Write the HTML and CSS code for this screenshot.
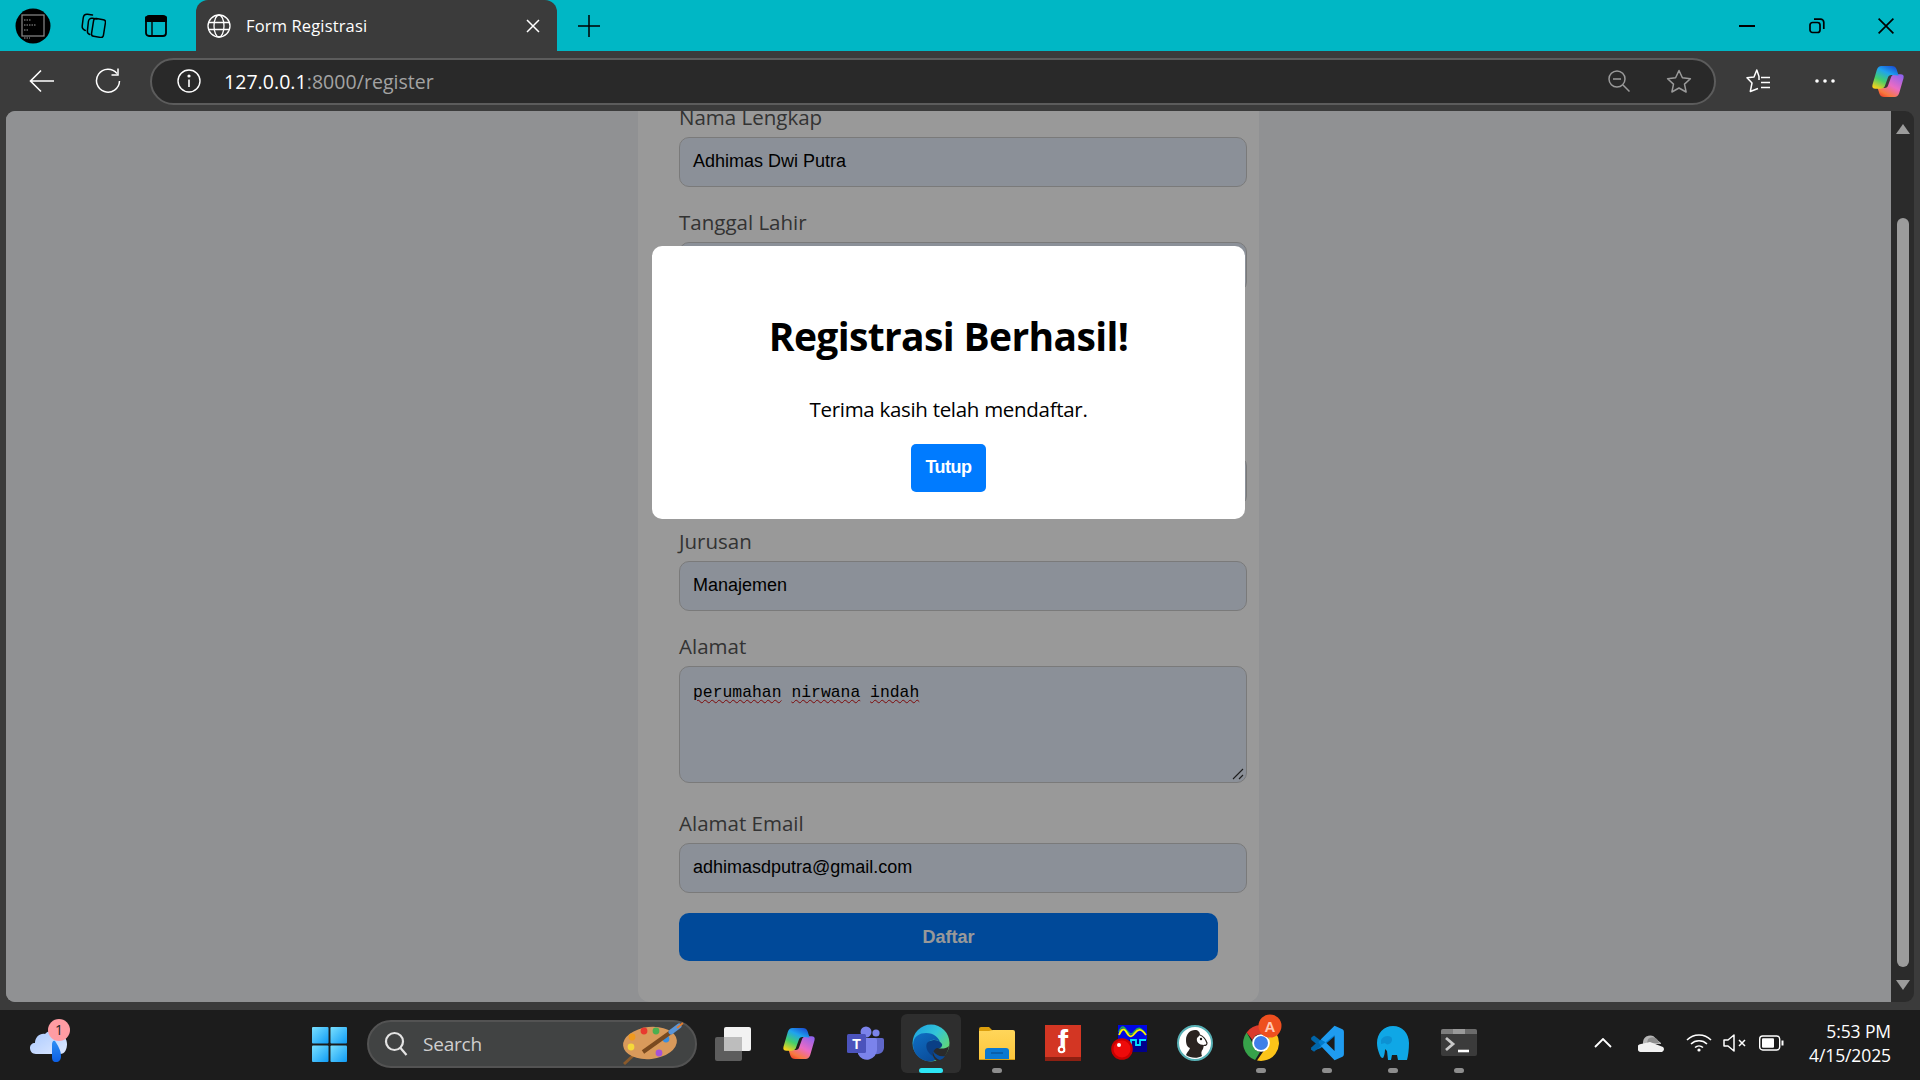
FILE: index.html
```html
<!DOCTYPE html>
<html lang="id">
<head>
<meta charset="utf-8">
<title>Form Registrasi</title>
<link rel="stylesheet" href="styles.css">
</head>
<body>
<div class="titlebar">
  <div class="slot s-avatar">
    <svg width="36" height="36" viewBox="0 0 36 36"><circle cx="18" cy="18" r="17.5" fill="#000"/><rect x="7" y="7" width="22" height="21" fill="none" stroke="#8a8a8a" stroke-width="1.2"/><path d="M9 12h7M9 17h12M9 22h5M9 30h6" stroke="#9a9a9a" stroke-width="1" stroke-dasharray="1.5 1"/></svg>
  </div>
  <div class="slot s-coll">
    <svg width="25" height="25" viewBox="0 0 25 25" fill="none" stroke="#000" stroke-width="1.5" stroke-linecap="round"><rect x="11.500" y="6" width="12" height="18" rx="2.500" transform="rotate(9 17.500 15)"/><path d="M8.800 21.500C7 20.800 6.200 19.500 6.400 17.800L7.400 8.500C7.700 6.500 9.200 5 11.200 5.300L16 6"/><path d="M4.300 17.500C2 16.500 1 15 1.200 13L2.200 5C2.500 2.500 4.200 1 6.500 1.200L11.500 2"/></svg>
  </div>
  <div class="slot s-win">
    <svg width="22" height="22" viewBox="0 0 22 22" fill="none" stroke="#000" stroke-width="1.800"><rect x="1" y="1" width="20" height="20" rx="3"/><path d="M1 2.500h20v3.500H1z" fill="#000"/><path d="M7 6v15" stroke-width="1.400"/></svg>
  </div>
  <div class="tab">
    <svg width="24" height="24" viewBox="0 0 24 24" fill="none" stroke="#fff" stroke-width="1.300"><circle cx="12" cy="12" r="11"/><ellipse cx="12" cy="12" rx="5" ry="11"/><path d="M1.500 8.500h21M1.500 15.500h21"/></svg>
    <span class="tab-title">Form Registrasi</span>
    <svg class="tab-close" width="14" height="14" viewBox="0 0 14 14" stroke="#fff" stroke-width="1.500"><path d="M1 1l12 12M13 1L1 13"/></svg>
  </div>
  <div class="slot s-plus">
    <svg width="22" height="22" viewBox="0 0 22 22" stroke="#000" stroke-width="1.500"><path d="M11 0v22M0 11h22"/></svg>
  </div>
  <div class="win-controls">
    <div class="slot s-ctrl"><svg width="16" height="4" viewBox="0 0 16 4" stroke="#000" stroke-width="2"><path d="M0 2h16"/></svg></div>
    <div class="slot s-ctrl"><svg width="16" height="16" viewBox="0 0 16 16" fill="none" stroke="#000" stroke-width="1.700"><rect x="1" y="4.500" width="10" height="10" rx="2.500"/><path d="M5 1.200h6.500c1.800 0 3.300 1.500 3.300 3.300V11"/></svg></div>
    <div class="slot s-ctrl s-close"><svg width="16" height="16" viewBox="0 0 16 16" stroke="#000" stroke-width="1.700"><path d="M.6.600l14.800 14.800M15.400.600L.6 15.400"/></svg></div>
  </div>
</div>

<div class="toolbar">
  <div class="slot s-back"><svg width="26" height="24" viewBox="0 0 26 24" fill="none" stroke="#fff" stroke-width="1.600"><path d="M25 12H1.500M12 1.500L1.500 12 12 22.500"/></svg></div>
  <div class="slot s-reload"><svg width="26" height="26" viewBox="0 0 26 26" fill="none" stroke="#fff" stroke-width="1.500"><path d="M22 5.500A11.500 11.500 0 1 0 24.500 13"/><path d="M23 .5V7h-6.500"/></svg></div>
  <div class="address">
    <svg width="24" height="24" viewBox="0 0 24 24" fill="none" stroke="#fff" stroke-width="1.400"><circle cx="12" cy="12" r="11"/><path d="M12 10.500V18" stroke-width="1.600"/><circle cx="12" cy="7" r=".9" fill="#fff"/></svg>
    <div class="url"><span class="url-host">127.0.0.1</span><span class="url-rest">:8000/register</span></div>
    <svg class="addr-zoom" width="22" height="22" viewBox="0 0 22 22" fill="none" stroke="#9a9a9a" stroke-width="1.500"><circle cx="9" cy="9" r="8"/><path d="M5 9h8M15 15l6.500 6.500"/></svg>
    <svg class="addr-star" width="26" height="24" viewBox="0 0 26 24" fill="none" stroke="#9a9a9a" stroke-width="1.500" stroke-linejoin="round"><path d="M13 1.500l3.400 7.300 8 .9-5.900 5.400 1.600 7.900-7.100-4-7.100 4 1.600-7.900L1.600 9.700l8-.9z"/></svg>
  </div>
  <div class="slot s-fav"><svg width="26" height="26" viewBox="0 0 26 26" fill="none" stroke="#fff" stroke-width="1.500" stroke-linejoin="round"><path d="M13 12V8.500L10.800 2 8 9 1 9.800l5 5.200-1.700 8.500 7.700-3"/><path d="M15 9.500h9M15 14.500h9M15 19.500h9"/></svg></div>
  <div class="slot s-dots"><svg width="20" height="4" viewBox="0 0 20 4" fill="#fff"><circle cx="2" cy="2" r="1.800"/><circle cx="10" cy="2" r="1.800"/><circle cx="18" cy="2" r="1.800"/></svg></div>
  <div class="slot s-copilot">
    <svg width="36" height="33" viewBox="0 0 100 100">
      <defs>
        <linearGradient id="cpA" x1=".75" y1="0" x2=".2" y2="1"><stop offset="0" stop-color="#1a55d6"/><stop offset=".3" stop-color="#1fa3ef"/><stop offset=".65" stop-color="#43cf6b"/><stop offset="1" stop-color="#f7d21c"/></linearGradient>
        <linearGradient id="cpB" x1=".85" y1="0" x2=".2" y2="1"><stop offset="0" stop-color="#8f63ee"/><stop offset=".5" stop-color="#ea6bc4"/><stop offset=".85" stop-color="#f77a3d"/><stop offset="1" stop-color="#f0442c"/></linearGradient>
      </defs>
      <path fill="url(#cpB)" d="M70 97H38Q28 97 24 87L18 68 40 70Q48 70 51 60L60 35Q64 28 72 28H88Q100 28 97 40L84 85Q80 97 70 97Z"/>
      <path fill="url(#cpA)" d="M30 3H62Q72 3 76 13L82 32 60 30Q52 30 49 40L40 65Q36 72 28 72H12Q0 72 3 60L16 15Q20 3 30 3Z"/>
    </svg>
  </div>
</div>

<div class="workspace">
  <main class="viewport">
    <div class="card">
      <div class="field"><div class="label">Nama Lengkap</div><div class="input">Adhimas Dwi Putra</div></div>
      <div class="field"><div class="label">Tanggal Lahir</div><div class="input"></div></div>
      <div class="covered"></div>
      <div class="field"><div class="label"></div><div class="input"></div></div>
      <div class="field"><div class="label">Jurusan</div><div class="input">Manajemen</div></div>
      <div class="field field-area">
        <div class="label">Alamat</div>
        <div class="input textarea"><span class="misspelt">perumahan</span> <span class="misspelt">nirwana</span> <span class="misspelt">indah</span>
          <svg class="resizer" width="12" height="12" viewBox="0 0 12 12" stroke="#333" stroke-width="1.100"><path d="M1 11L11 1M7 11l4-4"/></svg>
        </div>
      </div>
      <div class="field"><div class="label">Alamat Email</div><div class="input">adhimasdputra@gmail.com</div></div>
      <div class="submit">Daftar</div>
    </div>
    <div class="overlay">
      <div class="modal">
        <h1 class="modal-title">Registrasi Berhasil!</h1>
        <p class="modal-text">Terima kasih telah mendaftar.</p>
        <div class="modal-btn">Tutup</div>
      </div>
    </div>
  </main>
  <div class="scrollbar">
    <div class="arrow-up"></div>
    <div class="thumb"></div>
    <div class="arrow-down"></div>
  </div>
</div>

<div class="taskbar">
  <div class="slot t-weather">
    <svg width="48" height="48" viewBox="0 0 48 48">
      <defs><linearGradient id="wc" x1="0" y1="0" x2="1" y2="1"><stop offset="0" stop-color="#a9c9ff"/><stop offset="1" stop-color="#dfe9ff"/></linearGradient><linearGradient id="wd" x1="0" y1="0" x2="0" y2="1"><stop offset="0" stop-color="#2f8ff5"/><stop offset="1" stop-color="#0b5fe6"/></linearGradient></defs>
      <path fill="url(#wc)" d="M12 35C8 35 6 32 6 29S8 24 11 24C11 18 16 14 21 15 24 11 31 11 35 15 40 16 43 20 43 25S41 35 36 35Z"/>
      <path fill="url(#wd)" d="M31 22C34 27 37 31 37 37 37 41 35 43 32 43S28 41 28 38V26C28 23 29 21 31 22Z"/>
      <circle cx="35" cy="11" r="11" fill="#ff9ca3"/>
      <text class="w-badge" x="35" y="16" text-anchor="middle">1</text>
    </svg>
  </div>
  <div class="slot t-start">
    <svg width="35" height="35" viewBox="0 0 36 36"><defs><linearGradient id="wn" x1="0" y1="0" x2="1" y2="1"><stop offset="0" stop-color="#7ae0ff"/><stop offset="1" stop-color="#0f9bf5"/></linearGradient></defs><rect x="0" y="0" width="17" height="17" rx="1" fill="url(#wn)"/><rect x="19" y="0" width="17" height="17" rx="1" fill="url(#wn)"/><rect x="0" y="19" width="17" height="17" rx="1" fill="url(#wn)"/><rect x="19" y="19" width="17" height="17" rx="1" fill="url(#wn)"/></svg>
  </div>
  <div class="search">
    <svg width="24" height="26" viewBox="0 0 24 26" fill="none" stroke="#e4e4e4" stroke-width="2.200"><circle cx="10.500" cy="10.500" r="8.500"/><path d="M16.500 17l6 7"/></svg>
    <span class="search-text">Search</span>
    <svg class="palette" width="64" height="44" viewBox="0 0 64 44">
      <path stroke="#8a5a2b" stroke-width="3" d="M3 42l12-11"/>
      <ellipse cx="29" cy="21" rx="27" ry="16" fill="#d99a5b" transform="rotate(-6 29 21)"/>
      <circle cx="11" cy="15" r="3.400" fill="#f09a1e"/><circle cx="23" cy="9" r="3.400" fill="#e8392f"/><circle cx="35" cy="9" r="3.400" fill="#4caf50"/><circle cx="45" cy="17" r="3.400" fill="#3a8fe0"/><circle cx="38" cy="31" r="3.400" fill="#a653d6"/><circle cx="10" cy="25" r="3.400" fill="#f5d83a"/>
      <path stroke="#7a4a1f" stroke-width="4" d="M22 30L50 10"/><path stroke="#5a95d8" stroke-width="5" stroke-linecap="round" d="M50 10l8-6"/><path stroke="#e07b2e" stroke-width="2" d="M56 6l6-5"/>
    </svg>
  </div>
  <div class="apps">
    <div class="slot app"><svg width="36" height="36" viewBox="0 0 36 36"><rect x="0" y="12" width="27" height="24" rx="2" fill="#5d5d5d"/><rect x="9" y="2" width="27" height="24" rx="2" fill="#f2f2f2"/><rect x="9" y="12" width="18" height="14" fill="#bdbdbd"/></svg></div>
    <div class="slot app">
      <svg width="36" height="33" viewBox="0 0 100 100">
        <path fill="url(#cpB)" d="M70 97H38Q28 97 24 87L18 68 40 70Q48 70 51 60L60 35Q64 28 72 28H88Q100 28 97 40L84 85Q80 97 70 97Z"/>
        <path fill="url(#cpA)" d="M30 3H62Q72 3 76 13L82 32 60 30Q52 30 49 40L40 65Q36 72 28 72H12Q0 72 3 60L16 15Q20 3 30 3Z"/>
      </svg>
    </div>
    <div class="slot app">
      <svg width="38" height="34" viewBox="0 0 38 34"><circle cx="30" cy="7" r="3.600" fill="#7b83eb"/><path fill="#5f67c9" d="M25 12h11a2 2 0 0 1 2 2v8a7 7 0 0 1-12 4z"/><circle cx="20" cy="6" r="5.500" fill="#7b83eb"/><path fill="#7b83eb" d="M12 12h17a2 2 0 0 1 2 2v10a10 10 0 0 1-19 4z"/><rect x="1" y="8" width="19" height="19" rx="1.500" fill="#4b53bc"/><text class="teams-t" x="10.500" y="23" text-anchor="middle">T</text></svg>
    </div>
    <div class="slot app app-active">
      <svg width="38" height="38" viewBox="0 0 38 38">
        <defs>
          <linearGradient id="eg1" x1="0" y1="0" x2="1" y2=".8"><stop offset="0" stop-color="#1b9de2"/><stop offset=".5" stop-color="#32c5d8"/><stop offset="1" stop-color="#6fdc57"/></linearGradient>
          <linearGradient id="eg2" x1="0" y1="0" x2=".6" y2="1"><stop offset="0" stop-color="#0f6fc4"/><stop offset="1" stop-color="#0a4d9b"/></linearGradient>
        </defs>
        <circle cx="19" cy="19" r="18.500" fill="url(#eg1)"/>
        <path fill="url(#eg2)" d="M1 21C1 12 8 9 14 9 22 9 27 14 28 18 24 15 18 15 16 19 14 24 17 30 25 35 22 37 20 37.500 19 37.500 9 37.500 1 30 1 21Z"/>
        <path fill="#0a3f85" d="M15 19C20 14 27 16 30 20 31 23 27 25 24 26 21 28 24 32 28 35 20 34 12 26 15 19Z"/>
        <path fill="#2a2a2a" d="M25 24C29 25 34 25 37 22 36 29 31 36 25 37 22 35 20 31 21 28 22 26 23 25 25 24Z"/>
        <path fill="#0b4a96" d="M21 27C21 31 24 35 28 36 30 35 32 34 33 32 28 33 24 31 21 27Z"/>
      </svg>
    </div>
    <div class="slot app app-open">
      <svg width="36" height="34" viewBox="0 0 36 34"><defs><linearGradient id="fo" x1="0" y1="0" x2="0" y2="1"><stop offset="0" stop-color="#ffd65a"/><stop offset="1" stop-color="#fdc63c"/></linearGradient></defs><path fill="#dc9f0d" d="M0 3a2 2 0 0 1 2-2h8l5 5H0z"/><path fill="url(#fo)" d="M0 5h10l4-1h20a2 2 0 0 1 2 2v27H0z"/><path fill="#d69d14" d="M0 33h36v1H0z"/><path fill="#0b78d1" d="M6 33V25a3 3 0 0 1 3-3h18a3 3 0 0 1 3 3v8z"/><path stroke="#0a4f93" stroke-width="1.200" d="M12 27h12"/></svg>
    </div>
    <div class="slot app">
      <svg width="36" height="36" viewBox="0 0 36 36"><rect width="36" height="36" fill="#d33623"/><rect y="32" width="36" height="4" fill="#8d2012"/><text class="fdm-f" x="18" y="27" text-anchor="middle">f</text><circle cx="16.500" cy="24.500" r="2.800" fill="#d33623" stroke="#fff" stroke-width="2"/></svg>
    </div>
    <div class="slot app">
      <svg width="36" height="36" viewBox="0 0 36 36" fill="none"><rect x="7" y="0" width="29" height="15" fill="#0006e6"/><rect x="7" y="15" width="29" height="12" fill="#00008c"/><path stroke="#22b14c" stroke-width="1.500" d="M8 7c3-8 5-5 8-1s5 4 8 0 5-4 10 2"/><path stroke="#fff200" stroke-width="1.800" d="M8 10c3-7 5-7 8-2s5 4 8 0 6-5 11 2"/><path stroke="#00e5ff" stroke-width="1.800" d="M14 19h6v-4h5v5h4v-5h6"/><circle cx="11" cy="24" r="10.800" fill="#c80000"/><circle cx="11" cy="24" r="8.500" fill="#ee0b0b"/><circle cx="8" cy="20" r="2" fill="#fff"/></svg>
    </div>
    <div class="slot app">
      <svg width="36" height="36" viewBox="0 0 36 36"><circle cx="18" cy="18" r="17" fill="#fff" stroke="#57b0b5" stroke-width="2"/><path fill="#2a2320" d="M9 15C9 9 13 5 18 5 21 5 23 7 23 10L20 13C19 17 22 20 27 20L26 24C24 26 24 29 25 31 20 34 13 33 9 30 10 27 12 26 13 23 10 22 9 19 9 15Z"/><path fill="none" stroke="#2a2320" stroke-width="1.200" d="M23 10C26 11 29 15 30 18 30 20 28 21 27 20"/><circle cx="24" cy="14" r="1.200" fill="#111"/></svg>
    </div>
    <div class="slot app app-open">
      <svg class="chrome" width="36" height="36" viewBox="0 0 36 36"><path fill="#db3a2c" d="M18 0a18 18 0 0 1 15.600 9H18a9 9 0 0 0-8.500 6L3.600 7.400A18 18 0 0 1 18 0Z"/><path fill="#37a24a" d="M3.600 7.400l6.700 11.800A9 9 0 0 0 17 27l-4.900 8A18 18 0 0 1 3.600 7.400Z"/><path fill="#fcc419" d="M33.600 9A18 18 0 0 1 14 35.500L22 24a9 9 0 0 0 0-15z"/><circle cx="18" cy="18" r="8.800" fill="#fff"/><circle cx="18" cy="18" r="7" fill="#3f7fe8"/></svg>
      <svg class="chrome-badge" width="24" height="24" viewBox="0 0 24 24"><circle cx="12" cy="12" r="11.500" fill="#ee4f1f"/><text class="chrome-a" x="12" y="17.500" text-anchor="middle">A</text></svg>
    </div>
    <div class="slot app app-open">
      <svg width="36" height="36" viewBox="0 0 100 100"><path fill="#0065a9" d="M7 34L14 29 33 44 25 56 7 42Q4 38 7 34Z"/><path fill="#007acc" d="M7 66L71 3 73 30 33 64 14 71Q4 70 7 66Z"/><path fill="#0065a9" d="M7 62Q4 66 7 69L14 74 33 58 25 46Z"/><path fill="#1f9cf0" d="M71 2L93 12Q97 14 97 19V81Q97 86 93 88L71 98 33 58 46 48 71 72V28L46 48 33 40Z"/></svg>
    </div>
    <div class="slot app app-open">
      <svg width="34" height="36" viewBox="0 0 34 36"><path fill="#0fa7e6" d="M1 18C1 8 8 1 17 1 26 1 33 8 33 18 33 25 32 31 31 35H22L21 30H16L15 35H12L11 26 9 24C9 28 8 32 7 33 5 33 4 31 3 28 2 25 1 22 1 18Z"/><path fill="#0b7fc2" d="M5 15c2-4 7-5 10-3 2 2 1 6-2 7-2 1-3 0-4-1l-4 1z" opacity=".55"/></svg>
    </div>
    <div class="slot app app-open">
      <svg width="36" height="28" viewBox="0 0 36 28"><rect width="36" height="27" rx="2" fill="#3b3b3b"/><path fill="#7d7d7d" d="M0 2a2 2 0 0 1 2-2h10v5H0z"/><path fill="#9a9a9a" d="M12 0h12v5H12z"/><path fill="#6b6b6b" d="M24 0h10a2 2 0 0 1 2 2v3H24z"/><path fill="none" stroke="#c8c8c8" stroke-width="2.800" d="M5 9l7 6-7 6"/><path stroke="#fff" stroke-width="2.600" d="M17 22h11"/></svg>
    </div>
  </div>
  <div class="tray">
    <div class="slot tray-48"><svg width="18" height="10" viewBox="0 0 18 10" fill="none" stroke="#fff" stroke-width="1.800"><path d="M1 9l8-8 8 8"/></svg></div>
    <div class="slot tray-48"><svg width="26" height="18" viewBox="0 0 26 18"><path fill="#b7b7b7" d="M5 8a7 7 0 0 1 13-3l5 4v1H5z"/><path fill="#8e8e8e" d="M10 5a7 7 0 0 1 9 0l2 4H9z"/><path fill="#f1f1f1" d="M4 18a4 4 0 0 1-1-8l9-2 13 5a3 3 0 0 1-1 5z"/></svg></div>
    <div class="slot tray-48"><svg width="26" height="18" viewBox="0 0 26 18" fill="none" stroke="#fff" stroke-width="1.600"><path d="M1 6a17 17 0 0 1 24 0M5 10a11.500 11.500 0 0 1 16 0M9 13.500a6 6 0 0 1 8 0"/><circle cx="13" cy="16" r="1.600" fill="#fff" stroke="none"/></svg></div>
    <div class="slot tray-24"><svg width="24" height="18" viewBox="0 0 24 18" fill="none" stroke="#fff" stroke-width="1.500"><path d="M1 6v6h4l6 5V1L5 6z" stroke-linejoin="round"/><path d="M16 6l6 6M22 6l-6 6"/></svg></div>
    <div class="slot tray-48"><svg width="25" height="16" viewBox="0 0 25 16" fill="none" stroke="#fff" stroke-width="1.400"><rect x=".7" y="1" width="20" height="14" rx="3"/><rect x="3" y="3.200" width="12" height="9.600" rx="1" fill="#fff" stroke="none"/><path d="M22.500 5.500h2v5h-2z" fill="#fff" stroke="none"/></svg></div>
    <div class="clock"><div>5:53 PM</div><div>4/15/2025</div></div>
  </div>
</div>
</body>
</html>
```
FILE: styles.css
```css
* { box-sizing: border-box; }
html, body { margin: 0; height: 100%; }
body {
  width: 1920px;
  height: 1080px;
  overflow: hidden;
  display: flex;
  flex-direction: column;
  font-family: "Open Sans", "Noto Sans", sans-serif;
  background: #3b3b3b;
}
.slot { display: flex; align-items: center; justify-content: center; flex: none; }

/* title bar */
.titlebar { height: 51px; background: #00b7c5; display: flex; align-items: stretch; flex: none; }
.s-avatar { width: 66px; }
.s-coll { width: 54px; }
.s-win { width: 76px; padding-right: 5px; }
.tab {
  width: 361px;
  background: #3b3b3b;
  border-radius: 12px 12px 0 0;
  display: flex;
  align-items: center;
  padding-left: 11px;
  color: #fff;
}
.tab-title { margin-left: 15px; font-size: 16.5px; flex: 1; letter-spacing: 0.15px; }
.tab-close { margin-right: 17px; }
.s-plus { width: 64px; }
.win-controls { margin-left: auto; display: flex; }
.s-ctrl { width: 70px; }
.s-close { width: 68px; }

/* toolbar */
.toolbar { height: 60px; background: #3b3b3b; display: flex; align-items: center; padding-left: 12px; flex: none; }
.s-back { width: 60px; }
.s-reload { width: 72px; }
.address {
  margin-left: 6px;
  width: 1566px;
  height: 47px;
  background: #292929;
  border: 2px solid #5c5c5c;
  border-radius: 24px;
  display: flex;
  align-items: center;
  padding-left: 25px;
}
.url { margin-left: 23px; font-size: 19.5px; flex: 1; letter-spacing: 0.05px; }
.url-host { color: #fff; }
.url-rest { color: #a3a3a3; }
.addr-zoom { margin-right: 36px; }
.addr-star { margin-right: 22px; }
.s-fav { width: 85px; }
.s-dots { width: 48px; }
.s-copilot { width: 71px; padding-left: 6px; }

/* page viewport */
.workspace { height: 891px; display: flex; padding: 0 6px; flex: none; }
.viewport {
  width: 1885px;
  position: relative;
  overflow: hidden;
  background: #f0f2f5;
  border-radius: 9px 0 0 9px;
}
.card {
  width: 621px;
  height: 899px;
  margin: -8px auto 0;
  padding: 0 41px 41px;
  background: #fff;
  border-radius: 0 0 12px 12px;
}
.field { margin-bottom: 21px; }
.field-area { margin-bottom: 26px; }
.covered { height: 109px; }
.label { height: 28px; line-height: 28px; margin-bottom: 6px; font-size: 20.5px; color: #555; }
.input {
  width: 568px;
  height: 50px;
  padding: 0 13px;
  line-height: 47px;
  background: #e8f0fe;
  border: 1px solid #ccc;
  border-radius: 10px;
  font-family: "Liberation Sans", Arial, sans-serif;
  font-size: 18px;
  color: #000;
}
.textarea {
  position: relative;
  height: 117px;
  line-height: 26px;
  padding-top: 13px;
  font-family: "Liberation Mono", monospace;
  font-size: 16.4px;
}
.misspelt { text-decoration: underline wavy #d01010 1.4px; text-underline-offset: 2px; }
.resizer { position: absolute; right: 2px; bottom: 2px; }
.submit {
  width: 539px;
  height: 48px;
  line-height: 48px;
  margin-top: -1px;
  background: #007bff;
  color: #fff;
  border-radius: 10px;
  text-align: center;
  font-family: "Liberation Sans", Arial, sans-serif;
  font-weight: bold;
  font-size: 18px;
}

/* modal */
.overlay {
  position: absolute;
  inset: 0;
  background: rgba(0, 0, 0, .4);
  display: flex;
  justify-content: center;
  align-items: flex-start;
  padding-top: 135px;
}
.modal {
  width: 593px;
  height: 273px;
  background: #fff;
  border-radius: 10px;
  display: flex;
  flex-direction: column;
  align-items: center;
  padding-top: 59px;
}
.modal-title { margin: 0; font-size: 39px; line-height: 62px; font-weight: 700; color: #000; letter-spacing: -0.64px; }
.modal-text { margin: 27px 0 0; font-size: 20.5px; line-height: 30px; color: #000; letter-spacing: -0.3px; }
.modal-btn {
  margin-top: 20px;
  width: 75px;
  height: 48px;
  line-height: 47px;
  border-radius: 5px;
  background: #007bff;
  color: #fff;
  text-align: center;
  font-family: "Liberation Sans", Arial, sans-serif;
  font-weight: bold;
  font-size: 18px;
  letter-spacing: -0.5px;
}

/* scrollbar */
.scrollbar {
  width: 23px;
  background: #2b2b2b;
  border-radius: 0 9px 9px 0;
  display: flex;
  flex-direction: column;
  align-items: center;
  padding-top: 13px;
}
.arrow-up { width: 0; height: 0; border: 7.5px solid transparent; border-top: 0; border-bottom: 10px solid #9c9c9c; }
.thumb { width: 12px; height: 749px; margin: 84px 0 13px; background: #9c9c9c; border-radius: 6px; }
.arrow-down { width: 0; height: 0; border: 7.5px solid transparent; border-bottom: 0; border-top: 10px solid #9c9c9c; }

/* taskbar */
.taskbar {
  margin-top: 8px;
  height: 70px;
  background: #1c1c1c;
  display: flex;
  align-items: center;
  padding-bottom: 4px;
  flex: none;
}
.t-weather { width: 96px; }
.w-badge { font-family: "Open Sans", sans-serif; font-size: 14px; fill: #222; }
.t-start { width: 67px; margin-left: 200px; margin-top: 3px; }
.search {
  width: 330px;
  height: 48px;
  margin-left: 4px;
  margin-top: 2px;
  background: #414343;
  border: 2px solid #535353;
  border-radius: 24px;
  display: flex;
  align-items: center;
  padding-left: 15px;
  position: relative;
}
.search-text { margin-left: 15px; color: #cfcfcf; font-size: 19px; flex: 1; letter-spacing: -0.2px; }
.palette { margin-right: 10px; }
.apps { display: flex; margin-left: 3px; height: 66px; }
.app { width: 66px; height: 66px; position: relative; }
.app-active::before {
  content: "";
  position: absolute;
  inset: 4px 3px 3px;
  background: #2e2e2e;
  border-radius: 6px;
}
.app-active svg { position: relative; }
.app-active::after, .app-open::after {
  content: "";
  position: absolute;
  left: 50%;
  bottom: 3px;
  height: 5px;
  border-radius: 3px;
}
.app-active::after { width: 24px; margin-left: -12px; background: #2de6f5; }
.app-open::after { width: 10px; margin-left: -5px; bottom: 3px; background: #8d8d8d; }
.teams-t { font-family: "Liberation Sans", sans-serif; font-weight: bold; font-size: 14px; fill: #fff; }
.fdm-f { font-family: "Liberation Sans", sans-serif; font-weight: bold; font-size: 31px; fill: #fff; }
.chrome-badge { position: absolute; left: 30px; top: 4px; }
.chrome-a { font-family: "Liberation Sans", sans-serif; font-size: 15px; fill: #ffc9b5; font-weight: bold; }
.tray { display: flex; align-items: center; margin-left: auto; height: 66px; padding-right: 29px; }
.tray-48 { width: 48px; }
.tray-24 { width: 24px; }
.clock { width: 96px; text-align: right; color: #fff; font-size: 17.5px; line-height: 24px; letter-spacing: -0.1px; white-space: nowrap; }
```
